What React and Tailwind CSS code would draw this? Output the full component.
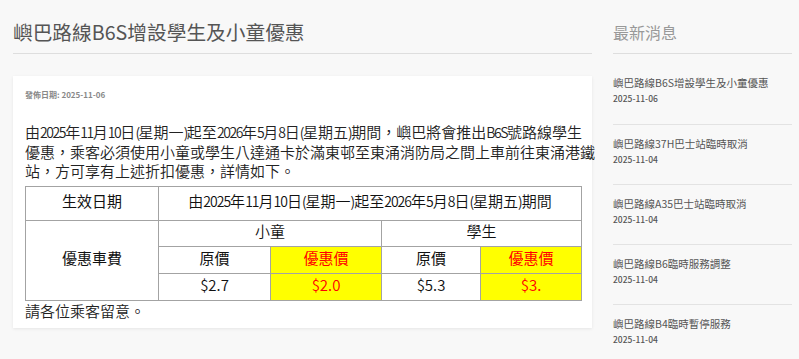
const news = [
  { title: "嶼巴路線B6S增設學生及小童優惠", date: "2025-11-06" },
  { title: "嶼巴路線37H巴士站臨時取消", date: "2025-11-04" },
  { title: "嶼巴路線A35巴士站臨時取消", date: "2025-11-04" },
  { title: "嶼巴路線B6臨時服務調整", date: "2025-11-04" },
  { title: "嶼巴路線B4臨時暫停服務", date: "2025-11-04" },
]

const cell = "border border-[#a3a3a3] text-center align-middle pb-[5px] pt-0"

// latin runs inside CJK text are set a touch narrower, as in the source font
const L = ({ children, tight }) => (
  <span className={tight ? "text-[14px] tracking-[-1.4px]" : "text-[14px] tracking-[-1px]"}>{children}</span>
)

const App = () => {
  return (
    <div
      className="min-h-screen w-full bg-[#f8f8f8] text-[#333]"
      style={{ fontFamily: '"Noto Sans CJK TC", "Noto Sans", sans-serif' }}
    >
      <div className="flex pl-[13px] pr-[7px]">
        {/* Main column */}
        <div className="w-[579px] shrink-0">
          <h1 className="h-[54px] pt-[18px] text-[19.7px] leading-[28px] text-[#555] border-b border-[#dedede]">
            嶼巴路線B6S增設學生及小童優惠
          </h1>

          <div className="mt-[22px] bg-white shadow-[0_1px_3px_rgba(0,0,0,0.08)] pl-[12px] pr-[12px] pt-[14px] pb-[8px]">
            <div className="text-[8px] leading-[10px] font-bold text-[#888]">發佈日期: 2025-11-06</div>

            <p className="mt-[22px] text-[15px] leading-[19px] font-[350] text-[#222] whitespace-nowrap">
              由<L tight>2025</L>年<L tight>11</L>月<L tight>10</L>日<L tight>(</L>星期一<L tight>)</L>起至<L tight>2026</L>年<L tight>5</L>月<L tight>8</L>日<L tight>(</L>星期五<L tight>)</L>期間，嶼巴將會推出<L tight>B6S</L>號路線學生
              <br />
              優惠，乘客必須使用小童或學生八達通卡於滿東邨至東涌消防局之間上車前往東涌港鐵
              <br />
              站，方可享有上述折扣優惠，詳情如下。
            </p>

            <table className="mt-[6px] table-fixed border-collapse border border-[#a3a3a3] w-[556px] text-[15px] leading-[20px] font-[350] text-[#111]">
              <colgroup>
                <col className="w-[133px]" />
                <col className="w-[112px]" />
                <col className="w-[111px]" />
                <col className="w-[99px]" />
                <col className="w-[101px]" />
              </colgroup>
              <tbody>
                <tr className="h-[34px]">
                  <td className={`${cell} font-normal`}>生效日期</td>
                  <td className={cell} colSpan={4}>
                    由<L>2025</L>年<L>11</L>月<L>10</L>日<L>(</L>星期一<L>)</L>起至<L>2026</L>年<L>5</L>月<L>8</L>日<L>(</L>星期五<L>)</L>期間
                  </td>
                </tr>
                <tr className="h-[26px]">
                  <td className={`${cell} font-normal`} rowSpan={3}>優惠車費</td>
                  <td className={cell} colSpan={2}>小童</td>
                  <td className={cell} colSpan={2}>學生</td>
                </tr>
                <tr className="h-[27px]">
                  <td className={`${cell} font-normal`}>原價</td>
                  <td className={`${cell} font-normal bg-[#ffff00] text-[#ff0000]`}>優惠價</td>
                  <td className={`${cell} font-normal`}>原價</td>
                  <td className={`${cell} font-normal bg-[#ffff00] text-[#ff0000]`}>優惠價</td>
                </tr>
                <tr className="h-[27px]">
                  <td className={cell}>$2.7</td>
                  <td className={`${cell} bg-[#ffff00] text-[#ff0000]`}>$2.0</td>
                  <td className={cell}>$5.3</td>
                  <td className={`${cell} bg-[#ffff00] text-[#ff0000]`}>$3.</td>
                </tr>
              </tbody>
            </table>

            <p className="text-[15px] leading-[19px] font-[350] text-[#222]">請各位乘客留意。</p>
          </div>
        </div>

        {/* Sidebar */}
        <div className="ml-[21px] w-[179px] shrink-0">
          <h2 className="h-[54px] pt-[21px] text-[16px] leading-[22px] text-[#999] border-b border-[#dedede]">
            最新消息
          </h2>
          <div className="pt-[10px]">
            {news.map((item, index) => (
              <div
                key={index}
                className={`h-[60px] pt-[12px] ${index > 0 ? "border-t border-[#e3e3e3]" : ""}`}
              >
                <div className="text-[10.5px] leading-[14px] text-[#555] whitespace-nowrap">{item.title}</div>
                <div className="mt-[1px] text-[8.5px] leading-[14px] font-medium text-[#555]">{item.date}</div>
              </div>
            ))}
          </div>
        </div>
      </div>
    </div>
  )
}

export default App
